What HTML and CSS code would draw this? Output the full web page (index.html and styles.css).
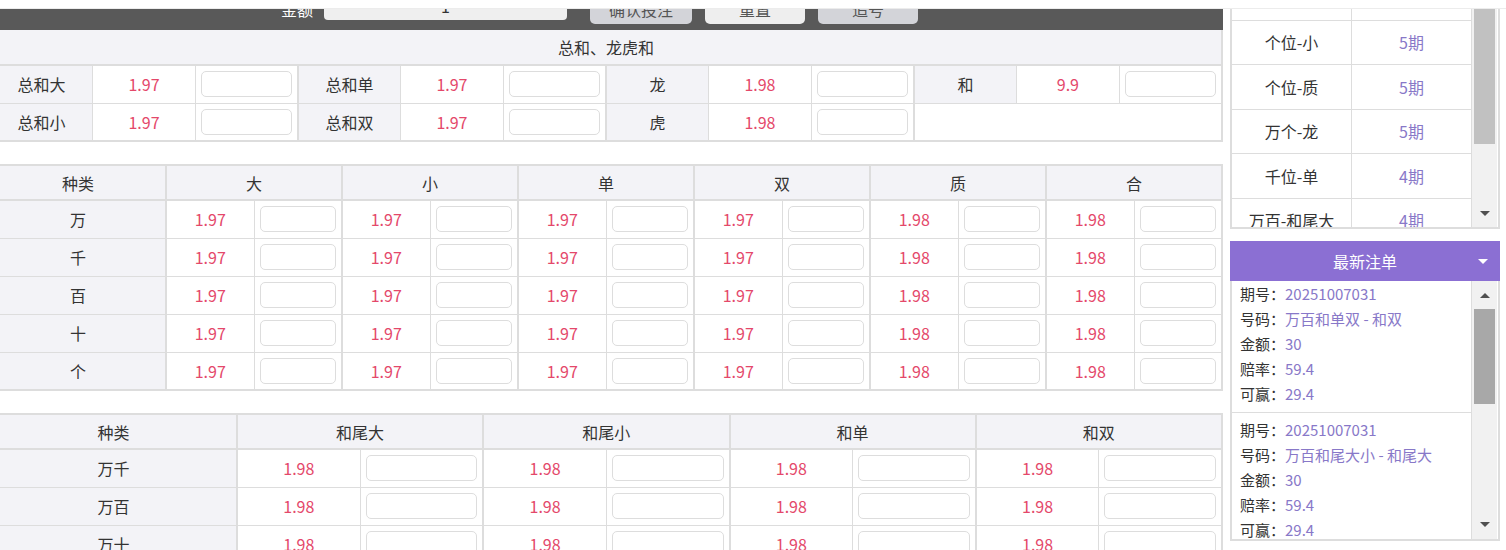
FILE: index.html
```html
<!DOCTYPE html>
<html lang="zh-CN">
<head>
    <meta charset="UTF-8">
    <title>两面盘</title>
    <link rel="stylesheet" href="styles.css">
</head>
<body>
    <div class="top-strip"></div>
    <div class="layout">
        <div class="main">
            <div class="main-inner">
                <div class="toolbar">
                    <span class="tb-label">金额</span>
                    <input type="text" class="tb-input" value="1">
                    <div class="tb-btn">确认投注</div>
                    <div class="tb-btn light">重置</div>
                    <div class="tb-btn">追号</div>
                </div>

                <!-- 总和、龙虎和 -->
                <table class="odds-table sum">
                    <tr><th colspan="12">总和、龙虎和</th></tr>
                    <tr>
                        <td class="name">总和大</td><td class="rate">1.97</td><td class="inp"><input class="amt"></td>
                        <td class="name g">总和单</td><td class="rate">1.97</td><td class="inp"><input class="amt"></td>
                        <td class="name g">龙</td><td class="rate">1.98</td><td class="inp"><input class="amt"></td>
                        <td class="name g">和</td><td class="rate">9.9</td><td class="inp"><input class="amt"></td>
                    </tr>
                    <tr>
                        <td class="name">总和小</td><td class="rate">1.97</td><td class="inp"><input class="amt"></td>
                        <td class="name g">总和双</td><td class="rate">1.97</td><td class="inp"><input class="amt"></td>
                        <td class="name g">虎</td><td class="rate">1.98</td><td class="inp"><input class="amt"></td>
                        <td class="g" colspan="3"></td>
                    </tr>
                </table>

                <!-- 单球 -->
                <table class="odds-table gap">
                    <colgroup><col class="kind7"></colgroup>
                    <tr>
                        <th>种类</th>
                        <th class="g" colspan="2">大</th><th class="g" colspan="2">小</th>
                        <th class="g" colspan="2">单</th><th class="g" colspan="2">双</th>
                        <th class="g" colspan="2">质</th><th class="g" colspan="2">合</th>
                    </tr>
                    <tr>
                        <td class="name">万</td>
                        <td class="rate g">1.97</td><td class="inp"><input class="amt"></td>
                        <td class="rate g">1.97</td><td class="inp"><input class="amt"></td>
                        <td class="rate g">1.97</td><td class="inp"><input class="amt"></td>
                        <td class="rate g">1.97</td><td class="inp"><input class="amt"></td>
                        <td class="rate g">1.98</td><td class="inp"><input class="amt"></td>
                        <td class="rate g">1.98</td><td class="inp"><input class="amt"></td>
                    </tr>
                    <tr>
                        <td class="name">千</td>
                        <td class="rate g">1.97</td><td class="inp"><input class="amt"></td>
                        <td class="rate g">1.97</td><td class="inp"><input class="amt"></td>
                        <td class="rate g">1.97</td><td class="inp"><input class="amt"></td>
                        <td class="rate g">1.97</td><td class="inp"><input class="amt"></td>
                        <td class="rate g">1.98</td><td class="inp"><input class="amt"></td>
                        <td class="rate g">1.98</td><td class="inp"><input class="amt"></td>
                    </tr>
                    <tr>
                        <td class="name">百</td>
                        <td class="rate g">1.97</td><td class="inp"><input class="amt"></td>
                        <td class="rate g">1.97</td><td class="inp"><input class="amt"></td>
                        <td class="rate g">1.97</td><td class="inp"><input class="amt"></td>
                        <td class="rate g">1.97</td><td class="inp"><input class="amt"></td>
                        <td class="rate g">1.98</td><td class="inp"><input class="amt"></td>
                        <td class="rate g">1.98</td><td class="inp"><input class="amt"></td>
                    </tr>
                    <tr>
                        <td class="name">十</td>
                        <td class="rate g">1.97</td><td class="inp"><input class="amt"></td>
                        <td class="rate g">1.97</td><td class="inp"><input class="amt"></td>
                        <td class="rate g">1.97</td><td class="inp"><input class="amt"></td>
                        <td class="rate g">1.97</td><td class="inp"><input class="amt"></td>
                        <td class="rate g">1.98</td><td class="inp"><input class="amt"></td>
                        <td class="rate g">1.98</td><td class="inp"><input class="amt"></td>
                    </tr>
                    <tr>
                        <td class="name">个</td>
                        <td class="rate g">1.97</td><td class="inp"><input class="amt"></td>
                        <td class="rate g">1.97</td><td class="inp"><input class="amt"></td>
                        <td class="rate g">1.97</td><td class="inp"><input class="amt"></td>
                        <td class="rate g">1.97</td><td class="inp"><input class="amt"></td>
                        <td class="rate g">1.98</td><td class="inp"><input class="amt"></td>
                        <td class="rate g">1.98</td><td class="inp"><input class="amt"></td>
                    </tr>
                </table>

                <!-- 和尾 -->
                <table class="odds-table gap">
                    <colgroup><col class="kind5"></colgroup>
                    <tr>
                        <th>种类</th>
                        <th class="g" colspan="2">和尾大</th><th class="g" colspan="2">和尾小</th>
                        <th class="g" colspan="2">和单</th><th class="g" colspan="2">和双</th>
                    </tr>
                    <tr>
                        <td class="name">万千</td>
                        <td class="rate g">1.98</td><td class="inp"><input class="amt"></td>
                        <td class="rate g">1.98</td><td class="inp"><input class="amt"></td>
                        <td class="rate g">1.98</td><td class="inp"><input class="amt"></td>
                        <td class="rate g">1.98</td><td class="inp"><input class="amt"></td>
                    </tr>
                    <tr>
                        <td class="name">万百</td>
                        <td class="rate g">1.98</td><td class="inp"><input class="amt"></td>
                        <td class="rate g">1.98</td><td class="inp"><input class="amt"></td>
                        <td class="rate g">1.98</td><td class="inp"><input class="amt"></td>
                        <td class="rate g">1.98</td><td class="inp"><input class="amt"></td>
                    </tr>
                    <tr>
                        <td class="name">万十</td>
                        <td class="rate g">1.98</td><td class="inp"><input class="amt"></td>
                        <td class="rate g">1.98</td><td class="inp"><input class="amt"></td>
                        <td class="rate g">1.98</td><td class="inp"><input class="amt"></td>
                        <td class="rate g">1.98</td><td class="inp"><input class="amt"></td>
                    </tr>
                </table>
            </div>
        </div>

        <div class="aside">
            <!-- 长龙 -->
            <div class="trend">
                <div class="trend-list">
                    <div class="trend-rows">
                        <div class="trend-row"><span>十位-双</span><span class="qi">6期</span></div>
                        <div class="trend-row"><span>个位-小</span><span class="qi">5期</span></div>
                        <div class="trend-row"><span>个位-质</span><span class="qi">5期</span></div>
                        <div class="trend-row"><span>万个-龙</span><span class="qi">5期</span></div>
                        <div class="trend-row"><span>千位-单</span><span class="qi">4期</span></div>
                        <div class="trend-row"><span>万百-和尾大</span><span class="qi">4期</span></div>
                    </div>
                </div>
                <div class="scroll">
                    <div class="thumb top-thumb"></div>
                    <div class="scroll-fill"></div>
                    <div class="arrow"><i class="tri-down"></i></div>
                </div>
            </div>

            <!-- 最新注单 -->
            <div class="bets-head">
                <span></span>
                <span>最新注单</span>
                <i class="caret"></i>
            </div>
            <div class="bets">
                <div class="bets-list">
                    <div class="bets-rows">
                        <div class="bet">
                            <p>期号：<em>20251007031</em></p>
                            <p>号码：<em>万百和单双 - 和双</em></p>
                            <p>金额：<em>30</em></p>
                            <p>赔率：<em>59.4</em></p>
                            <p>可赢：<em>29.4</em></p>
                        </div>
                        <div class="bet">
                            <p>期号：<em>20251007031</em></p>
                            <p>号码：<em>万百和尾大小 - 和尾大</em></p>
                            <p>金额：<em>30</em></p>
                            <p>赔率：<em>59.4</em></p>
                            <p>可赢：<em>29.4</em></p>
                        </div>
                    </div>
                </div>
                <div class="scroll">
                    <div class="arrow up"><i class="tri-up"></i></div>
                    <div class="thumb bets-thumb"></div>
                    <div class="scroll-fill"></div>
                    <div class="arrow down"><i class="tri-down"></i></div>
                </div>
            </div>
        </div>
    </div>
</body>
</html>
```

FILE: styles.css
```css
* {
    margin: 0;
    padding: 0;
    box-sizing: border-box;
}
html,
body {
    height: 100%;
}
body {
    font-family: "Noto Sans CJK SC", "Microsoft YaHei", sans-serif;
    font-size: 16px;
    color: #333;
    background: #fff;
    overflow: hidden;
}
.top-strip {
    height: 9px;
    border-bottom: 1px solid #ececec;
}
.layout {
    display: flex;
    align-items: flex-start;
}

/* 左侧投注区 */
.main {
    width: 1224px;
    flex-shrink: 0;
    overflow: hidden;
}
.main-inner {
    width: 1234px;
    margin-left: -11px;
}
.toolbar {
    height: 21px;
    background: #595959;
    display: flex;
    align-items: flex-start;
    padding-left: 292px;
    overflow: hidden;
}
.tb-label {
    color: #fff;
    line-height: 30px;
    margin-top: -15px;
}
.tb-input {
    width: 243px;
    height: 28px;
    margin: -17px 0 0 11px;
    border: 0;
    border-radius: 4px;
    background: #efefef;
    text-align: center;
    font-size: 16px;
    font-family: inherit;
    color: #333;
    outline: none;
}
.tb-btn {
    width: 102px;
    height: 30px;
    line-height: 30px;
    margin: -15px 0 0 23px;
    text-align: center;
    border-radius: 5px;
    background: #d3d4d9;
    color: #555;
}
.tb-btn + .tb-btn {
    width: 100px;
    margin-left: 13px;
}
.tb-btn.light {
    background: #eeeeee;
}

.odds-table {
    width: 1234px;
    table-layout: fixed;
    border-collapse: collapse;
    border: 2px solid #ddd;
}
.odds-table.sum {
    border-top: 0;
}
.odds-table.gap {
    margin-top: 22px;
}
.odds-table th,
.odds-table td {
    border: 1px solid #ddd;
    height: 38px;
    text-align: center;
    font-weight: normal;
}
.odds-table th {
    height: 35px;
    background: #f3f3f7;
    border-bottom: 2px solid #ddd;
}
.odds-table.sum th {
    border-top: 0;
}
.odds-table .name {
    background: #f3f3f7;
}
.odds-table .rate {
    color: #e4486a;
}
.odds-table .g {
    border-left: 2px solid #ddd;
}
.odds-table .inp {
    padding: 0 5px;
}
.kind7 {
    width: 176px;
}
.kind5 {
    width: 247px;
}
.amt {
    display: block;
    width: 100%;
    height: 26px;
    border: 1px solid #ddd;
    border-radius: 5px;
    background: #fff;
    outline: none;
}

/* 右侧 */
.aside {
    width: 270px;
    margin-left: 6px;
    flex-shrink: 0;
}
.trend {
    height: 220px;
    display: flex;
    border: 2px solid #ddd;
    border-top: 0;
}
.trend-list {
    width: 240px;
    overflow: hidden;
    border-right: 1px solid #ddd;
}
.trend-rows {
    margin-top: -33px;
}
.trend-row {
    display: flex;
    height: 44.5px;
    border-bottom: 1px solid #ddd;
}
.trend-row span {
    flex: 1;
    display: flex;
    align-items: center;
    justify-content: center;
}
.trend-row span:first-child {
    border-right: 1px solid #ddd;
}
.trend-row .qi {
    color: #8878c8;
}

.scroll {
    width: 25px;
    background: #f1f1f1;
    display: flex;
    flex-direction: column;
}
.scroll-fill {
    flex: 1;
}
.thumb {
    width: 21px;
    margin-left: 2px;
}
.top-thumb {
    height: 135px;
    background: #c1c1c1;
}
.bets-thumb {
    height: 95px;
    background: #a8a8a8;
}
.arrow {
    height: 28px;
    display: flex;
    align-items: center;
    justify-content: center;
}
.arrow.down {
    height: 30px;
}
.tri-down {
    width: 0;
    height: 0;
    border-left: 5px solid transparent;
    border-right: 5px solid transparent;
    border-top: 5px solid #505050;
}
.tri-up {
    width: 0;
    height: 0;
    border-left: 5px solid transparent;
    border-right: 5px solid transparent;
    border-bottom: 5px solid #505050;
}

.bets-head {
    height: 40px;
    margin-top: 12px;
    background: #8b6fd3;
    color: #fff;
    display: grid;
    grid-template-columns: 1fr auto 1fr;
    align-items: center;
}
.caret {
    justify-self: end;
    margin-right: 12px;
    width: 0;
    height: 0;
    border-left: 5px solid transparent;
    border-right: 5px solid transparent;
    border-top: 5px solid #fff;
}
.bets {
    height: 260px;
    display: flex;
    border: 2px solid #ddd;
    border-top: 0;
}
.bets-list {
    width: 240px;
    overflow: hidden;
    border-right: 1px solid #ddd;
}
.bets-rows {
    margin-top: -4px;
}
.bet {
    padding: 4px 0 6px 8px;
    border-bottom: 1px solid #ddd;
    font-size: 15px;
    line-height: 25px;
}
.bet em {
    font-style: normal;
    color: #8878c8;
}
```
